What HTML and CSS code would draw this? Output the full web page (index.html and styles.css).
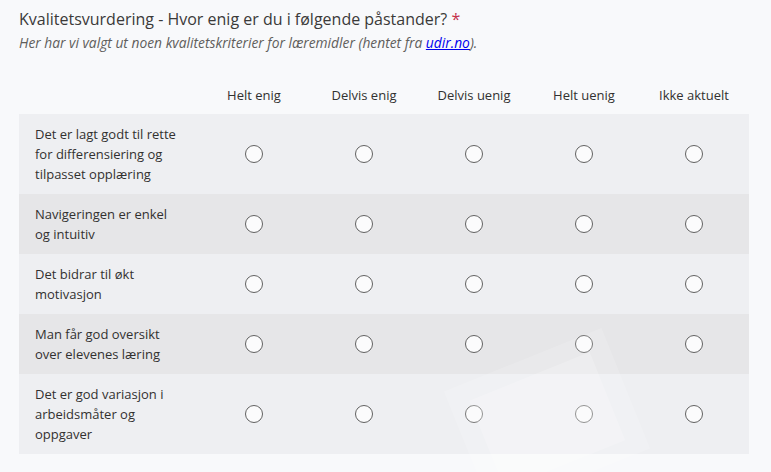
FILE: index.html
```html
<!DOCTYPE html>
<html>
<head>
<meta charset="utf-8">
<link rel="stylesheet" href="styles.css">
</head>
<body>
<div class="page">
  <div class="title">Kvalitetsvurdering - Hvor enig er du i følgende påstander? <span class="req">*</span></div>
  <div class="subtitle">Her har vi valgt ut noen kvalitetskriterier for læremidler (hentet fra <a href="#">udir.no</a>).</div>
  <div class="matrix">
    <div class="row head">
      <div class="label"></div>
      <div class="cell">Helt enig</div>
      <div class="cell">Delvis enig</div>
      <div class="cell">Delvis uenig</div>
      <div class="cell">Helt uenig</div>
      <div class="cell">Ikke aktuelt</div>
    </div>
    <div class="row odd tall">
      <div class="label">Det er lagt godt til rette for differensiering og tilpasset opplæring</div>
      <div class="cell"><span class="radio"></span></div>
      <div class="cell"><span class="radio"></span></div>
      <div class="cell"><span class="radio"></span></div>
      <div class="cell"><span class="radio"></span></div>
      <div class="cell"><span class="radio"></span></div>
    </div>
    <div class="row even">
      <div class="label">Navigeringen er enkel og intuitiv</div>
      <div class="cell"><span class="radio"></span></div>
      <div class="cell"><span class="radio"></span></div>
      <div class="cell"><span class="radio"></span></div>
      <div class="cell"><span class="radio"></span></div>
      <div class="cell"><span class="radio"></span></div>
    </div>
    <div class="row odd">
      <div class="label">Det bidrar til økt motivasjon</div>
      <div class="cell"><span class="radio"></span></div>
      <div class="cell"><span class="radio"></span></div>
      <div class="cell"><span class="radio"></span></div>
      <div class="cell"><span class="radio"></span></div>
      <div class="cell"><span class="radio"></span></div>
    </div>
    <div class="row even">
      <div class="label">Man får god oversikt over elevenes læring</div>
      <div class="cell"><span class="radio"></span></div>
      <div class="cell"><span class="radio"></span></div>
      <div class="cell"><span class="radio"></span></div>
      <div class="cell"><span class="radio"></span></div>
      <div class="cell"><span class="radio"></span></div>
    </div>
    <div class="row odd tall">
      <div class="label">Det er god variasjon i arbeidsmåter og oppgaver</div>
      <div class="cell"><span class="radio"></span></div>
      <div class="cell"><span class="radio"></span></div>
      <div class="cell"><span class="radio"></span></div>
      <div class="cell"><span class="radio"></span></div>
      <div class="cell"><span class="radio"></span></div>
    </div>
  </div>
  <div class="watermark"><div class="wm-inner"></div></div>
</div>
</body>
</html>
```
FILE: styles.css
```css
html, body {
  margin: 0;
  padding: 0;
  background: #f8f9fb;
}
body {
  font-family: "Open Sans", "Noto Sans", sans-serif;
  color: #323130;
  width: 771px;
  height: 472px;
  overflow: hidden;
}
.page {
  position: relative;
  height: 472px;
  overflow: hidden;
  box-sizing: border-box;
  padding: 8px 22px 0 19px;
}
.title {
  font-size: 16px;
  line-height: 22px;
  color: #3b3a39;
}
.req {
  color: #c4314b;
}
.subtitle {
  margin-top: 4px;
  font-size: 13.8px;
  font-style: italic;
  line-height: 18px;
  color: #605e5c;
}
.subtitle a {
  color: #0000ee;
  text-decoration: underline;
}
.matrix {
  margin-top: 23px;
  display: flex;
  flex-direction: column;
}
.row {
  display: grid;
  grid-template-columns: 180px repeat(5, 110px);
  align-items: center;
  height: 60px;
}
.row.head {
  height: 39px;
  align-items: start;
}
.row.head .cell {
  font-size: 13px;
  line-height: 18px;
  padding-top: 11px;
}
.row.tall {
  height: 80px;
}
.row.odd {
  background: #eeeff2;
}
.row.even {
  background: #e6e6e8;
}
.label {
  padding: 0 16px;
  font-size: 13px;
  line-height: 20px;
}
.cell {
  display: flex;
  justify-content: center;
  align-items: center;
}
.radio {
  display: block;
  width: 16px;
  height: 16px;
  border: 1px solid #616161;
  border-radius: 50%;
  background: #fbfbfc;
}
.watermark {
  position: absolute;
  left: 462px;
  top: 355px;
  width: 170px;
  height: 130px;
  transform: rotate(-22deg);
  background: rgba(255,255,255,0.15);
  pointer-events: none;
}
.wm-inner {
  position: absolute;
  left: 20px;
  top: 18px;
  width: 130px;
  height: 95px;
  background: rgba(255,255,255,0.2);
}
```
